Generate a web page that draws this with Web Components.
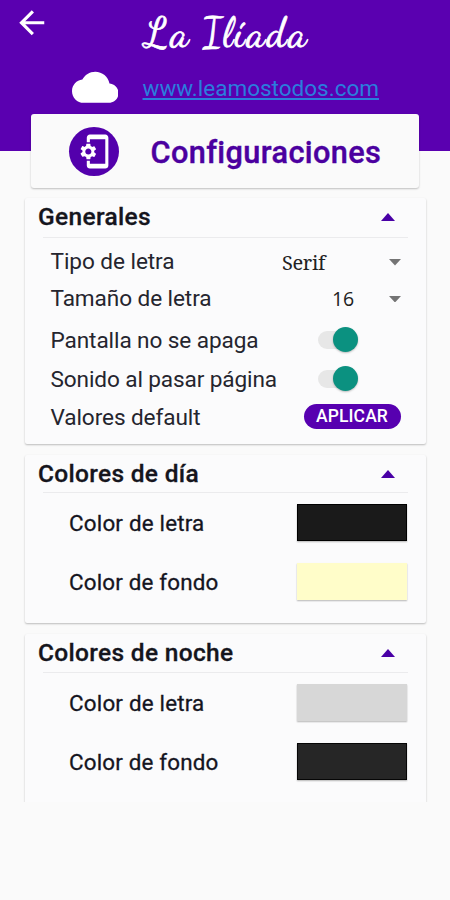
<!DOCTYPE html>
<html lang="es">
<head>
<meta charset="utf-8">
<title>Configuraciones</title>
<style>
html, body { margin: 0; background: #fafafa; }
body { width: 450px; height: 900px; overflow: hidden; font-family: Roboto, "Liberation Sans", sans-serif; color: #15151d; }
</style>
</head>
<body>
<settings-page></settings-page>
<script>
const define = (name, html, setup) => {
  const template = document.createElement('template');
  template.innerHTML = html;
  customElements.define(name, class extends HTMLElement {
    connectedCallback() {
      if (this.shadowRoot) return;
      this.attachShadow({ mode: 'open' }).append(template.content.cloneNode(true));
      if (setup) setup(this, this.shadowRoot);
    }
  });
};

/* Text whose tracking is adjusted to fill a given width. */
define('fit-text', `<style>
:host { display: inline-block; white-space: nowrap; }
</style><span><slot></slot></span>`, (el, root) => {
  const span = root.querySelector('span');
  const n = el.textContent.length;
  const diff = Number(el.getAttribute('width')) - span.getBoundingClientRect().width;
  el.style.letterSpacing = (diff / n).toFixed(3) + 'px';
});

define('app-header', `<style>
:host { display: block; box-sizing: border-box; height: 150.5px; background: #5a00b0; }
.top { display: flex; height: 64px; }
.back { width: 37.5px; height: 37.5px; margin: 4px 0 0 13px; fill: #fff; flex: none; }
h1 { margin: 3px 0 0 93px; font: normal 400 42px/60px "Dancing Script", "Z003", "URW Chancery L", "Liberation Serif", serif; color: #fff; -webkit-text-stroke: .7px #fff; transform: skewX(6deg); }
.site { display: flex; align-items: center; height: 47px; padding-left: 71.5px; }
.cloud { width: 46.5px; height: 46.5px; fill: #fff; margin-right: 24.5px; }
a { color: #2b7ddd; font-size: 22.5px; line-height: 30px; margin-top: 1px; }
a fit-text { text-decoration: underline; text-decoration-thickness: 1.5px; text-underline-offset: 2px; text-decoration-skip-ink: none; }
</style>
<div class="top">
<svg class="back" viewBox="0 0 24 24"><path d="M20 11H7.83l5.59-5.59L12 4l-8 8 8 8 1.41-1.41L7.83 13H20v-2z"/></svg>
<h1><fit-text width="169">La Ilíada</fit-text></h1>
</div>
<div class="site">
<svg class="cloud" viewBox="0 0 24 24"><path d="M19.35 10.04C18.67 6.59 15.64 4 12 4 9.11 4 6.6 5.64 5.35 8.04 2.34 8.36 0 10.91 0 14c0 3.31 2.69 6 6 6h13c2.76 0 5-2.24 5-5 0-2.64-2.05-4.78-4.65-4.96z"/></svg>
<a><fit-text width="236.5">www.leamostodos.com</fit-text></a>
</div>`);

define('title-card', `<style>
:host { display: flex; align-items: center; box-sizing: border-box; position: relative; width: 388px; height: 74px; margin: -36.5px 0 0 31px; padding-left: 38px; background: #fafafa; border-radius: 3px; box-shadow: 0 1px 2px rgba(0,0,0,.24); }
.disc { display: grid; place-items: center; width: 50px; height: 49px; border-radius: 50%; background: #5300ac; margin-right: 31.5px; }
svg { width: 37px; height: 37px; fill: #fff; }
h2 { margin: 3px 0 0; font-size: 30.7px; font-weight: 500; line-height: 40px; color: #4b009f; -webkit-text-stroke: .4px #4b009f; }
</style>
<div class="disc"><svg viewBox="0 0 24 24"><path d="M11.8 12.5v-1l1.1-.8c.1-.1.1-.2.1-.3l-1-1.7c-.1-.1-.2-.2-.3-.1l-1.3.4c-.3-.2-.6-.4-.9-.5l-.2-1.3c0-.1-.1-.2-.3-.2H7c-.1 0-.2.1-.3.2l-.2 1.3c-.3.1-.6.3-.9.5l-1.3-.5c-.1 0-.2 0-.3.1l-1 1.7c-.1.1 0 .2.1.3l1.1.8v1l-1.1.8c-.1.2-.1.3-.1.4l1 1.7c.1.1.2.2.3.1l1.4-.4c.3.2.6.4.9.5l.2 1.3c0 .1.1.2.2.2h2c.1 0 .2-.1.3-.2l.2-1.3c.3-.1.6-.3.9-.5l1.3.5c.1 0 .2 0 .3-.1l1-1.7c.1-.1 0-.2-.1-.3l-1.1-.9zM8 14c-1.1 0-2-.9-2-2s.9-2 2-2 2 .9 2 2-.9 2-2 2z"/><path d="M19 1H9c-1.1 0-2 .9-2 2v3h2V4h10v16H9v-2H7v3c0 1.1.9 2 2 2h10c1.1 0 2-.9 2-2V3c0-1.1-.9-2-2-2z"/></svg></div>
<h2><slot></slot></h2>`);

define('settings-panel', `<style>
:host { display: block; box-sizing: border-box; width: 401px; height: var(--h); margin: var(--top) 0 0 25px; background: #fbfbfc; border-radius: 2px; box-shadow: 0 1px 2px rgba(0,0,0,.25); }
header { display: flex; align-items: center; justify-content: space-between; height: var(--head); padding: 0 31px 0 13px; font-size: 24.5px; font-weight: 500; line-height: 30px; -webkit-text-stroke: .3px currentColor; }
svg { width: 14px; height: 8px; fill: #4900a6; }
hr { height: 1px; margin: 0 18px; border: 0; background: #ebebed; }
</style>
<header><slot name="title"></slot><svg viewBox="0 0 14 8"><path d="M7 0l7 8H0z"/></svg></header>
<hr><slot></slot>`);

define('setting-row', `<style>
:host { display: flex; align-items: center; justify-content: space-between; box-sizing: border-box; height: var(--h); margin-top: var(--gap, 0px); padding: 0 var(--end) 0 25.5px; font-size: 22.6px; line-height: 28px; color: #25252e; }
div { padding-top: var(--drop, 0px); }
</style>
<div><slot></slot></div><slot name="control"></slot>`);

define('drop-down', `<style>
:host { display: flex; align-items: center; color: #222; font-size: 19.5px; }
svg { width: 12px; height: 6.5px; fill: #747474; margin-top: 2px; }
::slotted(*) { margin: 2px var(--space) 0 0; }
</style>
<slot></slot><svg viewBox="0 0 12 6.5"><path d="M0 0h12L6 6.5z"/></svg>`);

define('toggle-switch', `<style>
:host { display: flex; align-items: center; justify-content: flex-end; width: 40px; height: 18px; margin-top: var(--dy, 0px); border-radius: 9px; background: linear-gradient(90deg, #e7e7e7 80%, transparent 80%); }
i { width: 25px; height: 25px; border-radius: 50%; background: #0b9180; box-shadow: 0 1px 2px rgba(0,0,0,.25); flex: none; }
</style><i></i>`);

define('pill-button', `<style>
:host { display: flex; align-items: center; justify-content: center; width: 97px; height: 25px; margin-top: -2px; border-radius: 13px; background: #5700b0; color: #fff; font-size: 17.5px; font-weight: 500; line-height: 25px; }
::slotted(*) { margin-top: 1px; }
</style><slot></slot>`);

define('color-row', `<style>
:host { display: flex; align-items: center; justify-content: space-between; box-sizing: border-box; height: 58.5px; padding: 0 19.5px 0 44px; font-size: 22.4px; line-height: 28px; color: #15151f; -webkit-text-stroke: .3px currentColor; }
i { box-sizing: border-box; width: 110px; height: 37px; margin-top: -1px; background: var(--c); border: 1px solid var(--b, var(--c)); box-shadow: 0 1px 1.5px rgba(0,0,0,.28); }
</style><div><slot></slot></div><i></i>`);

define('settings-page', `<style>
:host { display: block; height: 900px; }
.clip { height: 614px; overflow: hidden; }
.g { --top: 10px; --h: 246px; --head: 38.5px; }
.d { --top: 11px; --h: 168px; --head: 37px; }
.n { --top: 11px; --h: 175px; --head: 38px; }
.serif { font-family: "Noto Serif", "Liberation Serif", serif; font-size: 20px; }
.num { font-family: "Open Sans", sans-serif; }
</style>
<app-header></app-header>
<title-card><fit-text width="230">Configuraciones</fit-text></title-card>
<div class="clip">
<settings-panel class="g">
<fit-text slot="title" width="113">Generales</fit-text>
<setting-row style="--h:36px;--gap:6px;--end:25px"><fit-text width="124">Tipo de letra</fit-text><drop-down slot="control" style="--space:64px"><fit-text class="serif" width="43">Serif</fit-text></drop-down></setting-row>
<setting-row style="--h:37px;--end:25px;--drop:2px"><fit-text width="161">Tamaño de letra</fit-text><drop-down slot="control" style="--space:35px"><fit-text class="num" width="22">16</fit-text></drop-down></setting-row>
<setting-row style="--h:41px;--gap:4px;--end:68px"><fit-text width="208">Pantalla no se apaga</fit-text><toggle-switch slot="control" style="--dy:-2.5px"></toggle-switch></setting-row>
<setting-row style="--h:36px;--end:68px;--drop:1px"><fit-text width="226.5">Sonido al pasar página</fit-text><toggle-switch slot="control" style="--dy:-2px"></toggle-switch></setting-row>
<setting-row style="--h:39px;--end:25.5px;--drop:2px"><fit-text width="150">Valores default</fit-text><pill-button slot="control"><fit-text width="72">APLICAR</fit-text></pill-button></setting-row>
</settings-panel>
<settings-panel class="d">
<fit-text slot="title" width="161">Colores de día</fit-text>
<color-row style="--c:#1a1a1a;--b:#000;margin-top:1px"><fit-text width="135.5">Color de letra</fit-text></color-row>
<color-row style="--c:#fffdc9"><fit-text width="149.5">Color de fondo</fit-text></color-row>
</settings-panel>
<settings-panel class="n">
<fit-text slot="title" width="195.5">Colores de noche</fit-text>
<color-row style="--c:#d7d7d7;margin-top:1px"><fit-text width="135.5">Color de letra</fit-text></color-row>
<color-row style="--c:#262626;--b:#060606"><fit-text width="149.5">Color de fondo</fit-text></color-row>
</settings-panel>
</div>`);
</script>
</body>
</html>
